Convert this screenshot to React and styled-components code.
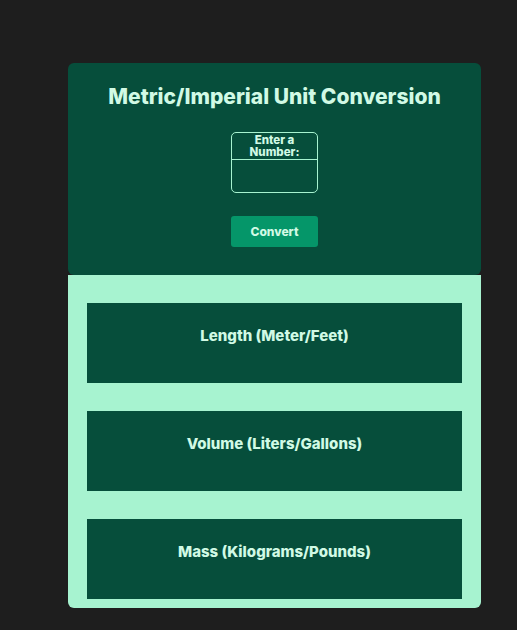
import React, { useState } from 'react';
import styled, { createGlobalStyle } from 'styled-components';

const GlobalStyle = createGlobalStyle`
  html, body {
    margin: 0;
    background: #1e1e1e;
    font-family: Inter, 'Noto Sans', sans-serif;
  }
`;

const sections = [
  'Length (Meter/Feet)',
  'Volume (Liters/Gallons)',
  'Mass (Kilograms/Pounds)',
];

const App = () => {
  const [value, setValue] = useState('');

  return (
    <>
      <GlobalStyle />
      <Page>
        <Card>
          <Header>
            <Title>Metric/Imperial Unit Conversion</Title>
            <InputBox>
              <InputLabel htmlFor='number'>Enter a Number:</InputLabel>
              <NumberInput
                id='number'
                type='number'
                value={value}
                onChange={(e) => setValue(e.target.value)}
              />
            </InputBox>
            <ConvertButton>Convert</ConvertButton>
          </Header>
          <Body>
            {sections.map((s) => (
              <Section key={s}>
                <SectionTitle>{s}</SectionTitle>
              </Section>
            ))}
          </Body>
        </Card>
      </Page>
    </>
  );
};

const Page = styled.div`
  padding: 63px 0 22px 68px;
`;

const Card = styled.div`
  width: 413px;
  display: flex;
  flex-direction: column;
`;

const Header = styled.header`
  background: #064e3b;
  border-radius: 6px;
  padding: 20px 0 28px;
  display: flex;
  flex-direction: column;
  align-items: center;
`;

const Title = styled.h1`
  margin: 0;
  font-size: 21px;
  line-height: 28px;
  font-weight: 800;
  color: #d1fae5;
`;

const InputBox = styled.div`
  margin-top: 21px;
  width: 87px;
  box-sizing: border-box;
  border: 1px solid #a7f3d0;
  border-radius: 5px;
  display: flex;
  flex-direction: column;
`;

const InputLabel = styled.label`
  display: block;
  height: 27px;
  padding-top: 1px;
  box-sizing: border-box;
  text-align: center;
  font-size: 11.5px;
  line-height: 12px;
  font-weight: 800;
  color: #d1fae5;
  border-bottom: 1px solid #a7f3d0;
`;

const NumberInput = styled.input`
  height: 32px;
  border: none;
  background: transparent;
  outline: none;
  color: #d1fae5;
  font-family: inherit;
  text-align: center;
  padding: 0;
  width: 100%;
`;

const ConvertButton = styled.button`
  margin-top: 23px;
  width: 87px;
  height: 31px;
  border: none;
  border-radius: 3px;
  background: #059669;
  color: #d1fae5;
  font-family: inherit;
  font-size: 12px;
  font-weight: 800;
  cursor: pointer;
`;

const Body = styled.div`
  background: #a7f3d0;
  border-radius: 0 0 6px 6px;
  padding: 28px 19px 9px;
  display: flex;
  flex-direction: column;
  gap: 28px;
`;

const Section = styled.div`
  background: #064e3b;
  height: 80px;
  padding-top: 24px;
  box-sizing: border-box;
`;

const SectionTitle = styled.h2`
  margin: 0;
  text-align: center;
  font-size: 15px;
  line-height: 18px;
  font-weight: 800;
  color: #d1fae5;
`;

export default App;
